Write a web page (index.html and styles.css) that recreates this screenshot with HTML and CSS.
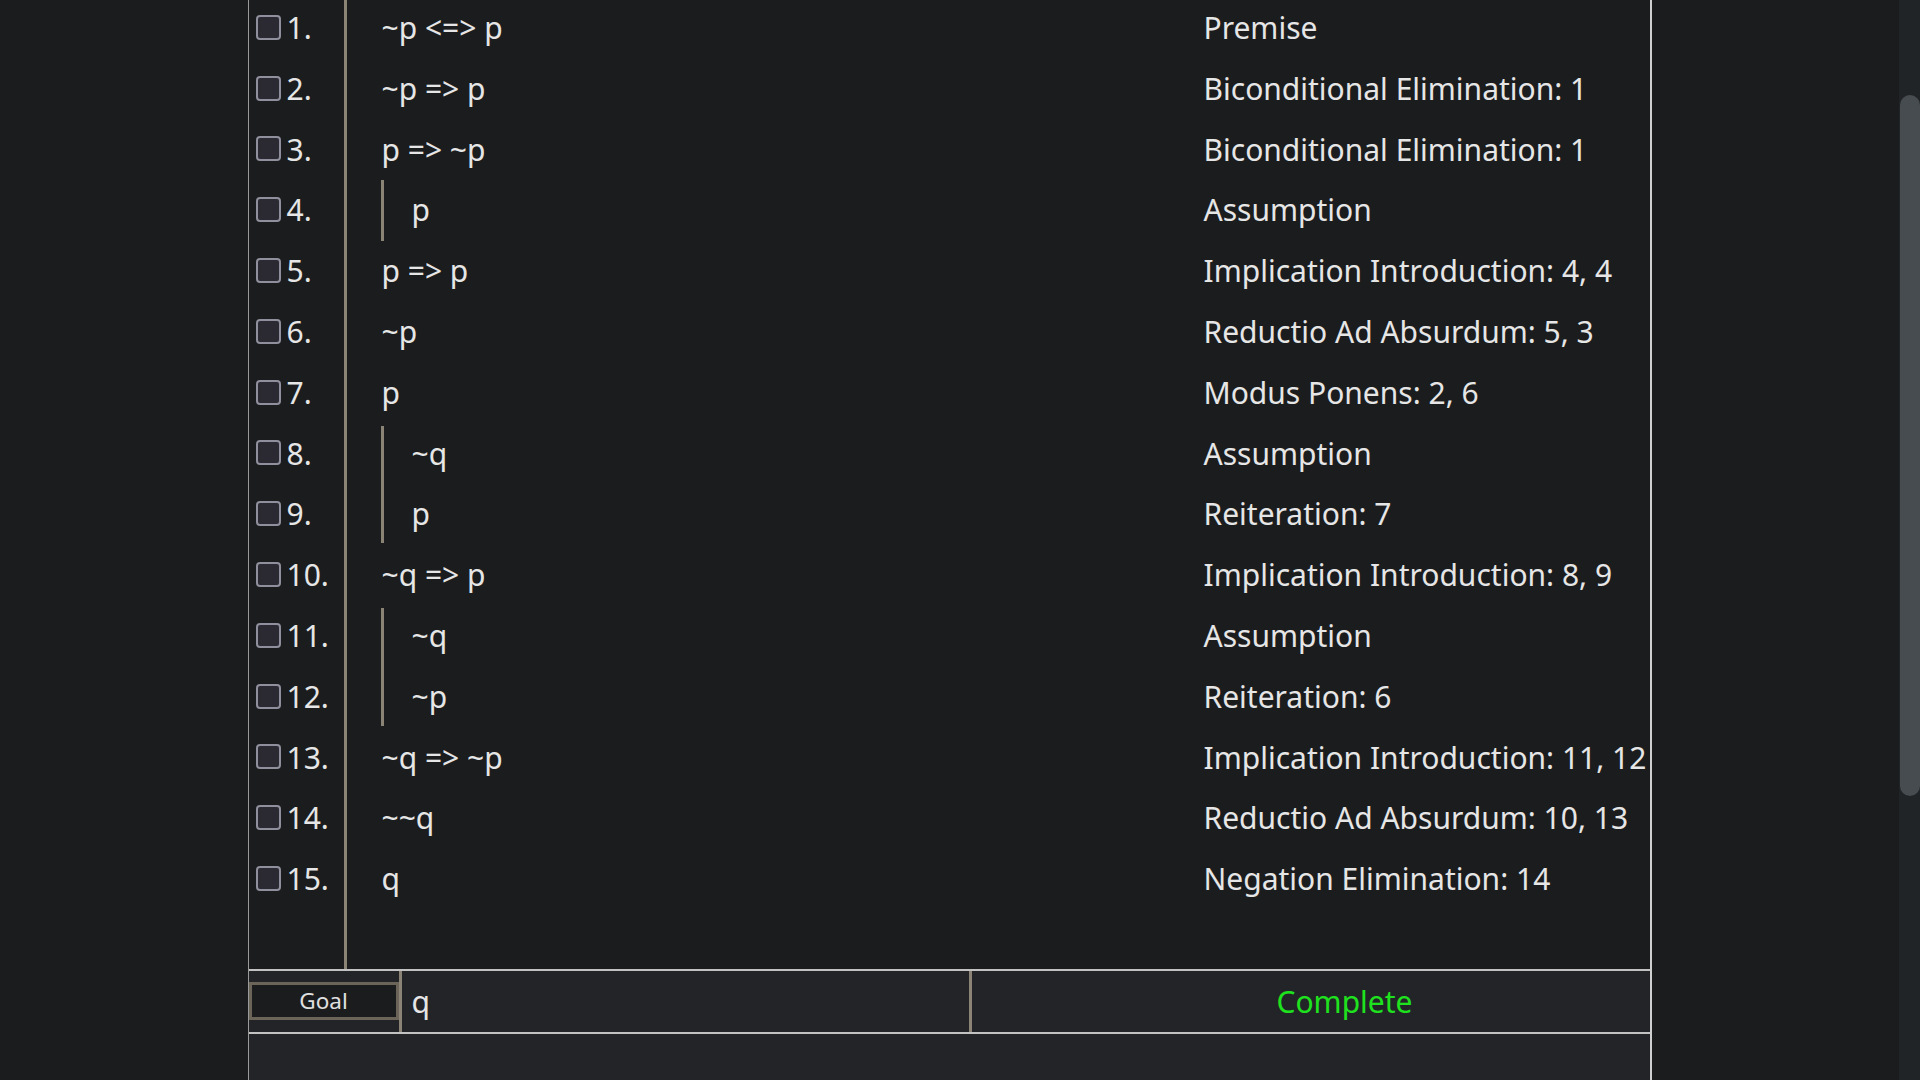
FILE: index.html
```html
<!DOCTYPE html>
<html lang="en">
<head>
<meta charset="utf-8">
<title>Proof</title>
<link rel="stylesheet" href="styles.css">
</head>
<body>
<div class="viewport">
  <main class="page">
    <section class="proof">
      <div class="lines">
        <div class="row"><div class="num"><input type="checkbox" class="box"><span>1.</span></div><div class="formula"><span class="f">~p &lt;=&gt; p</span></div><div class="just">Premise</div></div>
        <div class="row"><div class="num"><input type="checkbox" class="box"><span>2.</span></div><div class="formula"><span class="f">~p =&gt; p</span></div><div class="just">Biconditional Elimination: 1</div></div>
        <div class="row"><div class="num"><input type="checkbox" class="box"><span>3.</span></div><div class="formula"><span class="f">p =&gt; ~p</span></div><div class="just">Biconditional Elimination: 1</div></div>
        <div class="row"><div class="num"><input type="checkbox" class="box"><span>4.</span></div><div class="formula"><div class="sub"><span class="f">p</span></div></div><div class="just">Assumption</div></div>
        <div class="row"><div class="num"><input type="checkbox" class="box"><span>5.</span></div><div class="formula"><span class="f">p =&gt; p</span></div><div class="just">Implication Introduction: 4, 4</div></div>
        <div class="row"><div class="num"><input type="checkbox" class="box"><span>6.</span></div><div class="formula"><span class="f">~p</span></div><div class="just">Reductio Ad Absurdum: 5, 3</div></div>
        <div class="row"><div class="num"><input type="checkbox" class="box"><span>7.</span></div><div class="formula"><span class="f">p</span></div><div class="just">Modus Ponens: 2, 6</div></div>
        <div class="row"><div class="num"><input type="checkbox" class="box"><span>8.</span></div><div class="formula"><div class="sub first"><span class="f">~q</span></div></div><div class="just">Assumption</div></div>
        <div class="row"><div class="num"><input type="checkbox" class="box"><span>9.</span></div><div class="formula"><div class="sub last"><span class="f">p</span></div></div><div class="just">Reiteration: 7</div></div>
        <div class="row"><div class="num"><input type="checkbox" class="box"><span>10.</span></div><div class="formula"><span class="f">~q =&gt; p</span></div><div class="just">Implication Introduction: 8, 9</div></div>
        <div class="row"><div class="num"><input type="checkbox" class="box"><span>11.</span></div><div class="formula"><div class="sub first"><span class="f">~q</span></div></div><div class="just">Assumption</div></div>
        <div class="row"><div class="num"><input type="checkbox" class="box"><span>12.</span></div><div class="formula"><div class="sub last"><span class="f">~p</span></div></div><div class="just">Reiteration: 6</div></div>
        <div class="row"><div class="num"><input type="checkbox" class="box"><span>13.</span></div><div class="formula"><span class="f">~q =&gt; ~p</span></div><div class="just">Implication Introduction: 11, 12</div></div>
        <div class="row"><div class="num"><input type="checkbox" class="box"><span>14.</span></div><div class="formula"><span class="f">~~q</span></div><div class="just">Reductio Ad Absurdum: 10, 13</div></div>
        <div class="row"><div class="num"><input type="checkbox" class="box"><span>15.</span></div><div class="formula"><span class="f">q</span></div><div class="just">Negation Elimination: 14</div></div>
        <div class="row filler"><div class="num"></div><div class="formula"></div><div class="just"></div></div>
      </div>
      <div class="goalbar">
        <div class="goalcell"><button class="goal" type="button">Goal</button></div>
        <div class="goalinput">q</div>
        <div class="status">Complete</div>
      </div>
      <div class="below"></div>
    </section>
  </main>
  <div class="scrollbar"><div class="thumb"></div></div>
</div>
</body>
</html>
```
FILE: styles.css
```css
html, body {
  margin: 0;
  padding: 0;
  height: 100%;
  overflow: hidden;
  background: #1b1c1e;
}

body {
  font-family: "Noto Sans", "Open Sans", sans-serif;
  color: #e6e6e6;
}

.viewport {
  display: flex;
  width: 1920px;
  height: 1080px;
}

.page {
  flex: 1;
  overflow: hidden;
  background: #1b1c1e;
}

.proof {
  box-sizing: border-box;
  width: 1404px;
  margin: -2px auto 0;
  border-left: 1px solid #9a9a9a;
  border-right: 2px solid #cfcfcf;
  display: flex;
  flex-direction: column;
}

.lines {
  display: flex;
  flex-direction: column;
}

.row {
  display: grid;
  grid-template-columns: 98px 857px 1fr;
  height: 60.8px;
  font-size: 30px;
  line-height: 60.8px;
}

.row.filler {
  height: 59px;
}

.num {
  box-sizing: border-box;
  border-right: 3px solid #8b8376;
  padding-left: 7px;
  display: flex;
  align-items: center;
  gap: 6px;
  white-space: nowrap;
}

.box {
  appearance: none;
  -webkit-appearance: none;
  box-sizing: border-box;
  width: 25px;
  height: 25px;
  margin: 0 0 2px;
  border: 2.5px solid #8f8f9d;
  border-radius: 4px;
  background: #2b2a33;
  flex: none;
}

.formula {
  display: flex;
  padding-left: 35px;
  white-space: nowrap;
}

.sub {
  box-sizing: border-box;
  height: 100%;
  margin-left: -1px;
  border-left: 3px solid #8b8376;
  padding-left: 28px;
}

.sub.first {
  margin-top: 2px;
  height: calc(100% - 2px);
  line-height: 56.8px;
}

.sub.last {
  height: calc(100% - 2px);
  line-height: 60.8px;
}

.just {
  white-space: nowrap;
}

.goalbar {
  display: grid;
  grid-template-columns: 150px 570px 1fr;
  height: 61px;
  background: #232427;
  border-top: 2px solid #c2c2c2;
  border-bottom: 2px solid #c2c2c2;
}

.goalcell {
  display: flex;
  align-items: center;
}

.goal {
  box-sizing: border-box;
  width: 150px;
  height: 38px;
  margin: 0;
  padding: 0;
  background: #1b1c1e;
  border: 3px solid #6b6458;
  color: #e0e0e0;
  font-family: "Noto Sans", "Open Sans", sans-serif;
  font-size: 22.5px;
  line-height: 30px;
}

.goalinput {
  border-left: 3px solid #8b8376;
  padding-left: 10px;
  font-size: 30px;
  line-height: 61px;
}

.status {
  border-left: 3px solid #8b8376;
  padding-left: 305px;
  font-size: 30px;
  line-height: 61px;
  color: #1fe21f;
}

.below {
  height: 120px;
  background: #232427;
}

.scrollbar {
  width: 21px;
  height: 1080px;
  background: #212426;
  display: flex;
  flex-direction: column;
  align-items: flex-end;
}

.thumb {
  width: 20px;
  height: 701px;
  margin-top: 95px;
  border-radius: 10px;
  background: #474c50;
}
```
